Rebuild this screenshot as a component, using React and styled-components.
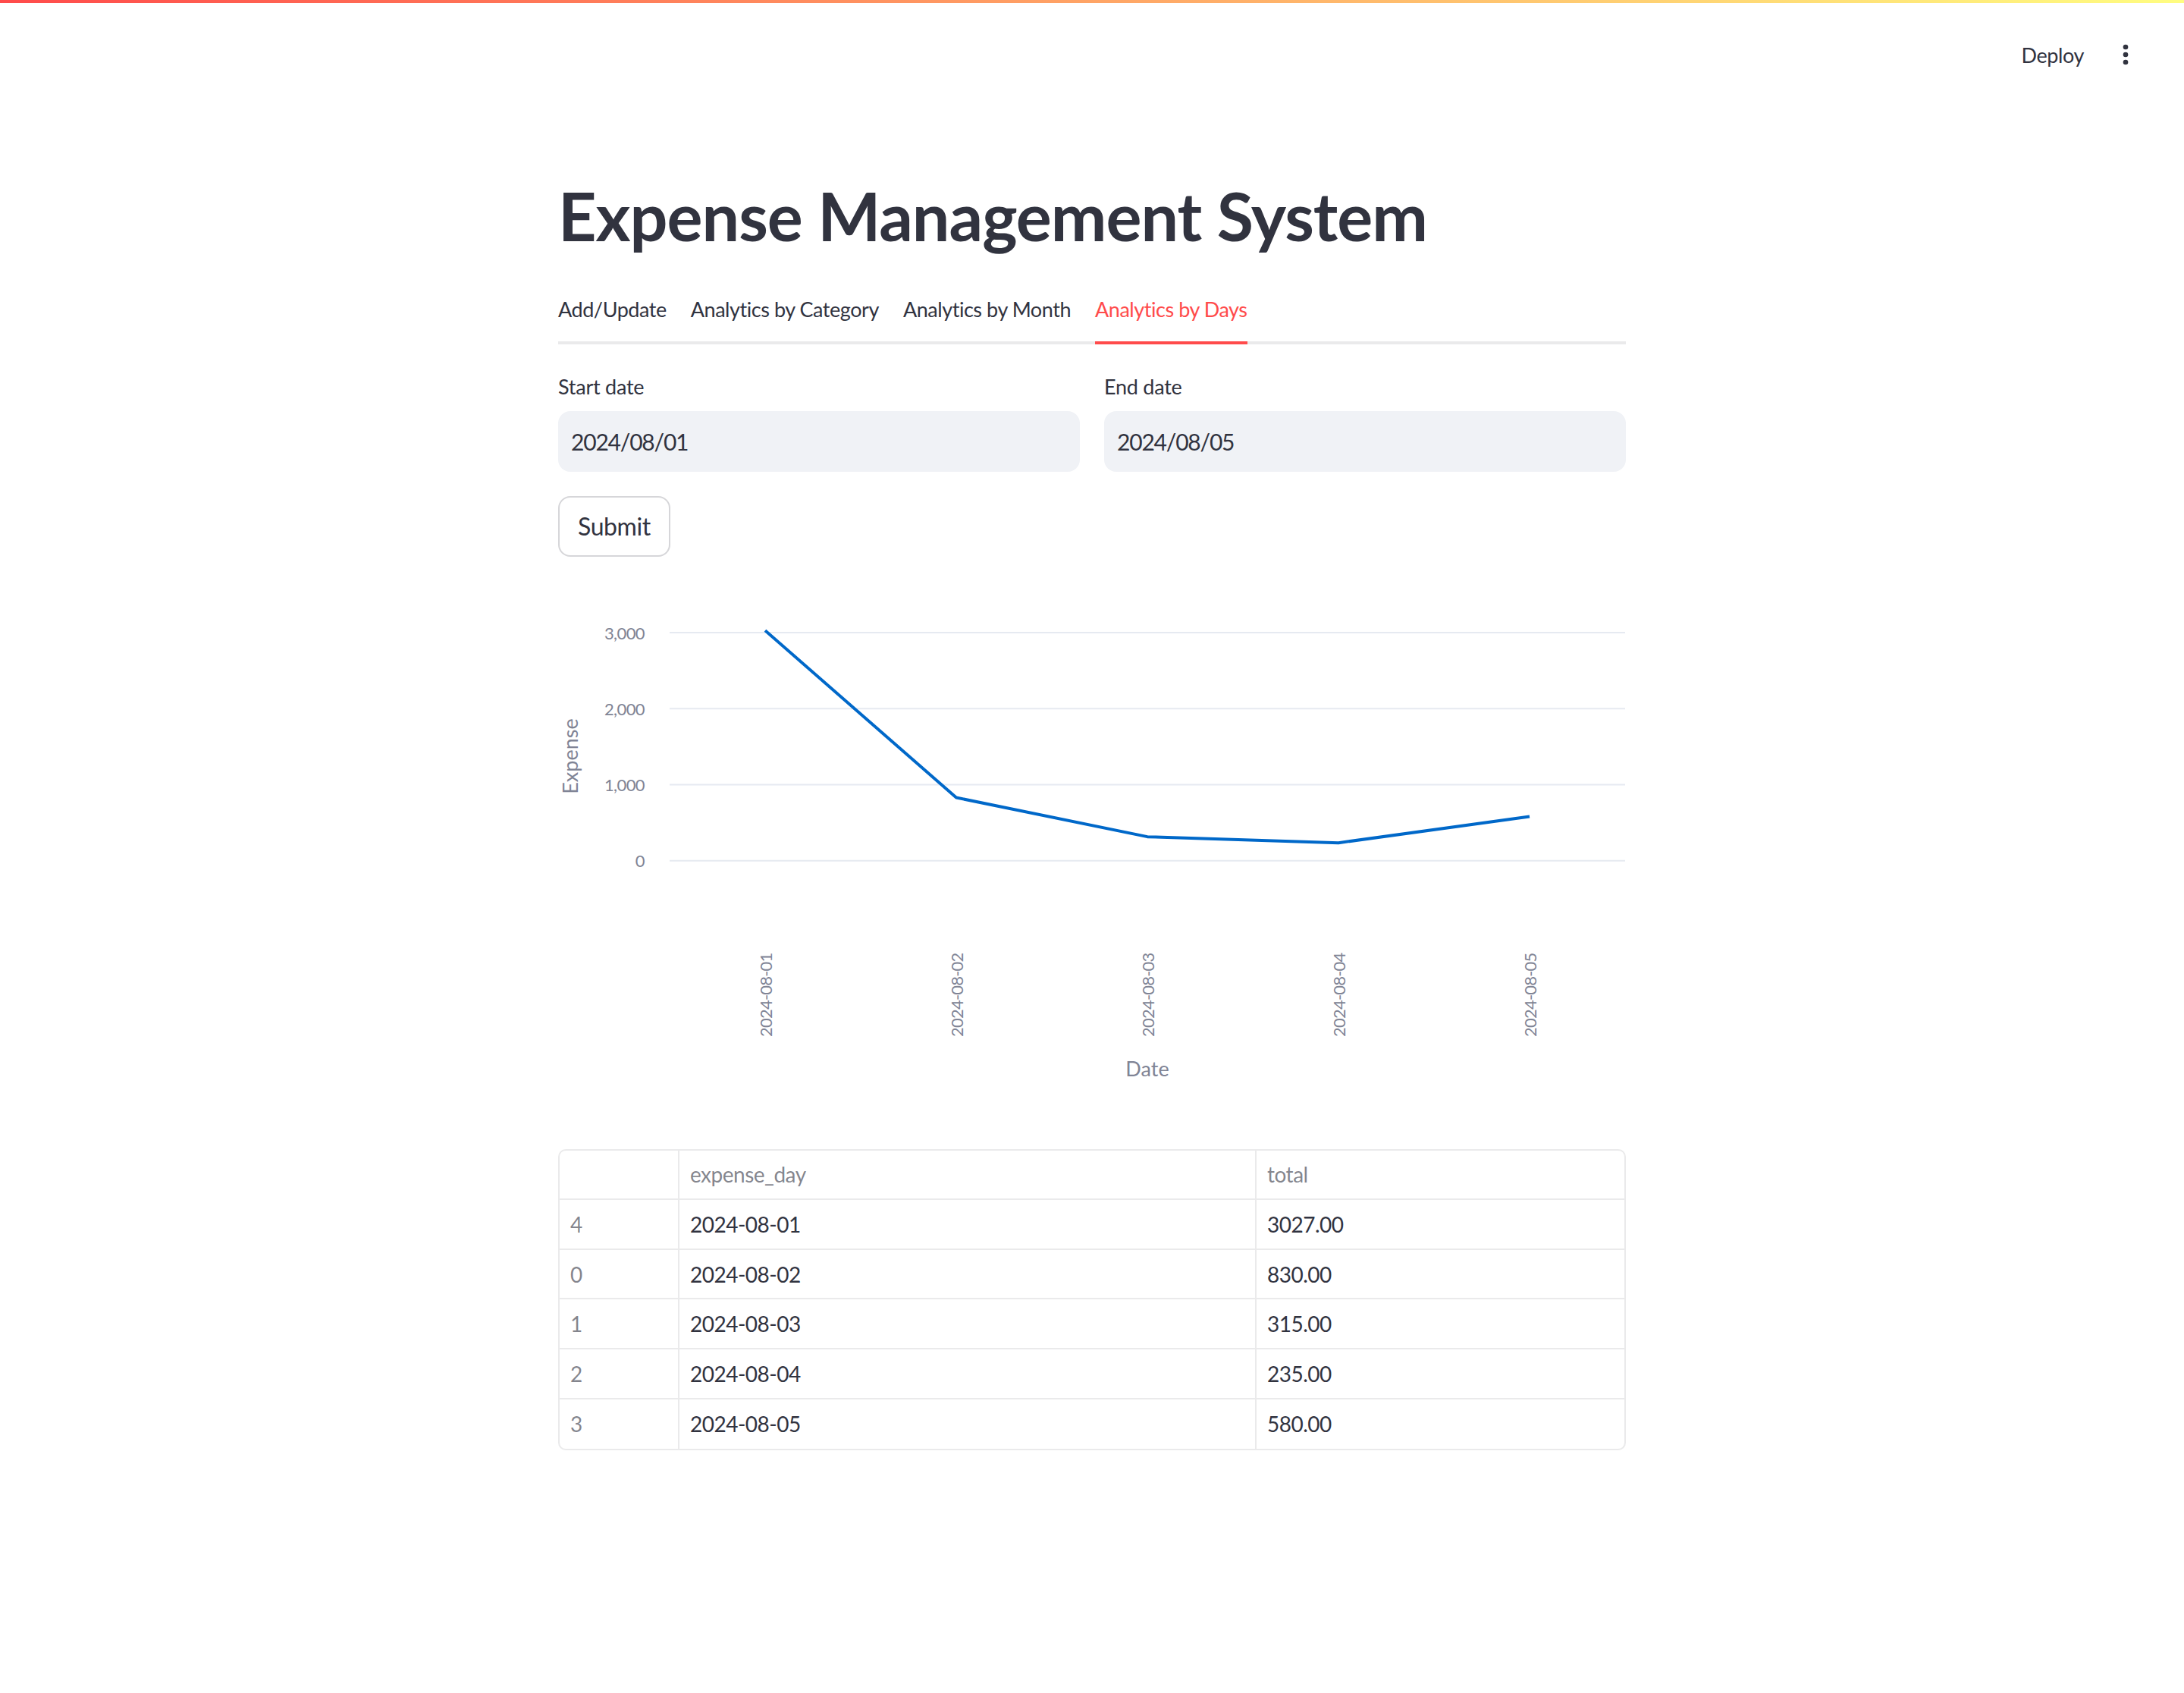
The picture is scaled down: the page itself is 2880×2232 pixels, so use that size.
import React from "react";
import styled, { createGlobalStyle } from "styled-components";

const GlobalStyle = createGlobalStyle`
  *, *::before, *::after { box-sizing: border-box; }
  html, body { margin: 0; padding: 0; background: #ffffff; }
  body {
    font-family: Lato, "Noto Sans", sans-serif;
    color: rgb(49, 51, 63);
    -webkit-font-smoothing: antialiased;
  }
`;

const Page = styled.div`
  min-height: 2232px;
  display: flex;
  flex-direction: column;
`;

const Header = styled.header`
  height: 140px;
  display: flex;
  flex-direction: column;
`;

const Decoration = styled.div`
  height: 4px;
  background: linear-gradient(90deg, rgb(255, 75, 75), rgb(255, 253, 128));
`;

const Toolbar = styled.div`
  flex: 1;
  display: flex;
  justify-content: flex-end;
  align-items: center;
  gap: 19px;
  padding-right: 57px;
`;

const DeployButton = styled.button`
  border: none;
  background: transparent;
  font-family: inherit;
  font-size: 27px;
  letter-spacing: -0.4px;
  color: rgb(49, 51, 63);
  padding: 12px 16px;
  cursor: pointer;
`;

const MenuButton = styled.button`
  width: 40px;
  height: 40px;
  border: none;
  background: transparent;
  padding: 0;
  display: flex;
  align-items: center;
  justify-content: center;
`;

const Main = styled.main`
  width: 1408px;
  margin: 0 auto;
  padding-top: 52px;
  display: flex;
  flex-direction: column;
`;

const Title = styled.h1`
  margin: 0;
  padding: 40px 0 32px;
  font-size: 88px;
  font-weight: 700;
  line-height: 1.2;
  letter-spacing: -1px;
  color: rgb(49, 51, 63);
`;

const TabList = styled.div`
  display: flex;
  gap: 32px;
  border-bottom: 4px solid rgba(49, 51, 63, 0.1);
`;

const Tab = styled.div`
  height: 84px;
  padding-bottom: 4px;
  margin-bottom: -4px;
  display: flex;
  align-items: center;
  font-size: 27px;
  letter-spacing: -0.45px;
  color: ${(p) => (p.$active ? "rgb(255, 75, 75)" : "rgb(49, 51, 63)")};
  border-bottom: 4px solid ${(p) => (p.$active ? "rgb(255, 75, 75)" : "transparent")};
  white-space: nowrap;
`;

const TabPanel = styled.section`
  padding-top: 32px;
  display: flex;
  flex-direction: column;
  gap: 32px;
`;

const Columns = styled.div`
  display: grid;
  grid-template-columns: 1fr 1fr;
  gap: 32px;
`;

const Field = styled.div`
  display: flex;
  flex-direction: column;
`;

const Label = styled.label`
  font-size: 27px;
  letter-spacing: -0.25px;
  line-height: 48px;
  margin-bottom: 8px;
  color: rgb(49, 51, 63);
`;

const DateBox = styled.div`
  height: 80px;
  border-radius: 16px;
  background: rgb(240, 242, 246);
  display: flex;
  align-items: center;
  padding-left: 17px;
  font-size: 30px;
  letter-spacing: -1.2px;
  color: rgb(49, 51, 63);
`;

const SubmitButton = styled.button`
  align-self: flex-start;
  height: 80px;
  padding: 0 24px;
  border: 2px solid rgba(49, 51, 63, 0.2);
  border-radius: 16px;
  background: #ffffff;
  font-family: inherit;
  font-size: 32px;
  letter-spacing: -0.4px;
  color: rgb(49, 51, 63);
`;

const ChartSvg = styled.svg`
  display: block;
  width: 1408px;
  height: 717px;
  font-family: Lato, "Noto Sans", sans-serif;
  letter-spacing: -0.8px;
`;

const DataTable = styled.div`
  border: 2px solid rgba(49, 51, 63, 0.1);
  border-radius: 10px;
  overflow: hidden;
  margin-bottom: 200px;
`;

const TableRow = styled.div`
  display: grid;
  grid-template-columns: 158px 761px 1fr;
  height: 65.6px;
  border-bottom: ${(p) => (p.$last ? "none" : "2px solid rgba(49, 51, 63, 0.1)")};
`;

const Cell = styled.div`
  display: flex;
  align-items: center;
  padding-left: 14px;
  font-size: 28px;
  letter-spacing: -0.5px;
  color: ${(p) => (p.$muted ? "rgba(49, 51, 63, 0.6)" : "rgb(49, 51, 63)")};
  border-right: 2px solid rgba(49, 51, 63, 0.1);
  &:last-child { border-right: none; }
`;

const data = [
  { idx: 4, day: "2024-08-01", total: 3027 },
  { idx: 0, day: "2024-08-02", total: 830 },
  { idx: 1, day: "2024-08-03", total: 315 },
  { idx: 2, day: "2024-08-04", total: 235 },
  { idx: 3, day: "2024-08-05", total: 580 },
];

const chartByDate = [...data].sort((a, b) => a.day.localeCompare(b.day));

const PLOT_LEFT = 147;
const PLOT_RIGHT = 1407;
const ZERO_Y = 368.7;
const PER_UNIT = 0.10023;
const STEP = (PLOT_RIGHT - PLOT_LEFT) / chartByDate.length;
const xAt = (i) => PLOT_LEFT + STEP / 2 + STEP * i;
const yAt = (v) => ZERO_Y - v * PER_UNIT;

function Chart() {
  const ticks = [0, 1000, 2000, 3000];
  const points = chartByDate.map((d, i) => `${xAt(i)},${yAt(d.total)}`).join(" ");
  const axisColor = "#808495";
  return (
    <ChartSvg viewBox="0 0 1408 717">
      {ticks.map((t) => (
        <g key={t}>
          <line x1={PLOT_LEFT} x2={PLOT_RIGHT} y1={yAt(t)} y2={yAt(t)} stroke="#e6eaf1" strokeWidth="2" />
          <text x="114" y={yAt(t)} textAnchor="end" dominantBaseline="central" fontSize="22" letterSpacing="-0.6" fill={axisColor}>
            {t.toLocaleString("en-US")}
          </text>
        </g>
      ))}
      <text
        transform="translate(15 231) rotate(-90)"
        textAnchor="middle"
        dominantBaseline="central"
        fontSize="27"
        letterSpacing="0"
        fill={axisColor}
      >
        Expense
      </text>
      <polyline points={points} fill="none" stroke="#0068c9" strokeWidth="4" strokeLinejoin="round" />
      {chartByDate.map((d, i) => (
        <text
          key={d.day}
          transform={`translate(${xAt(i)} 490.5) rotate(-90)`}
          textAnchor="end"
          dominantBaseline="central"
          fontSize="22"
          fill={axisColor}
        >
          {d.day}
        </text>
      ))}
      <text
        x={(PLOT_LEFT + PLOT_RIGHT) / 2}
        y="642"
        textAnchor="middle"
        dominantBaseline="central"
        fontSize="27"
        letterSpacing="0"
        fill={axisColor}
      >
        Date
      </text>
    </ChartSvg>
  );
}

const tabs = ["Add/Update", "Analytics by Category", "Analytics by Month", "Analytics by Days"];

export default function App() {
  return (
    <Page>
      <GlobalStyle />
      <Header>
        <Decoration />
        <Toolbar>
          <DeployButton>Deploy</DeployButton>
          <MenuButton aria-label="Main menu">
            <svg width="40" height="40" viewBox="0 0 24 24">
              <circle cx="12" cy="6" r="2" fill="rgb(49,51,63)" />
              <circle cx="12" cy="12" r="2" fill="rgb(49,51,63)" />
              <circle cx="12" cy="18" r="2" fill="rgb(49,51,63)" />
            </svg>
          </MenuButton>
        </Toolbar>
      </Header>
      <Main>
        <Title>Expense Management System</Title>
        <TabList>
          {tabs.map((t) => (
            <Tab key={t} $active={t === "Analytics by Days"}>
              {t}
            </Tab>
          ))}
        </TabList>
        <TabPanel>
          <Columns>
            <Field>
              <Label>Start date</Label>
              <DateBox>2024/08/01</DateBox>
            </Field>
            <Field>
              <Label>End date</Label>
              <DateBox>2024/08/05</DateBox>
            </Field>
          </Columns>
          <SubmitButton>Submit</SubmitButton>
          <Chart />
          <DataTable>
            <TableRow>
              <Cell $muted />
              <Cell $muted>expense_day</Cell>
              <Cell $muted>total</Cell>
            </TableRow>
            {data.map((d, i) => (
              <TableRow key={d.idx} $last={i === data.length - 1}>
                <Cell $muted>{d.idx}</Cell>
                <Cell>{d.day}</Cell>
                <Cell>{d.total.toFixed(2)}</Cell>
              </TableRow>
            ))}
          </DataTable>
        </TabPanel>
      </Main>
    </Page>
  );
}
